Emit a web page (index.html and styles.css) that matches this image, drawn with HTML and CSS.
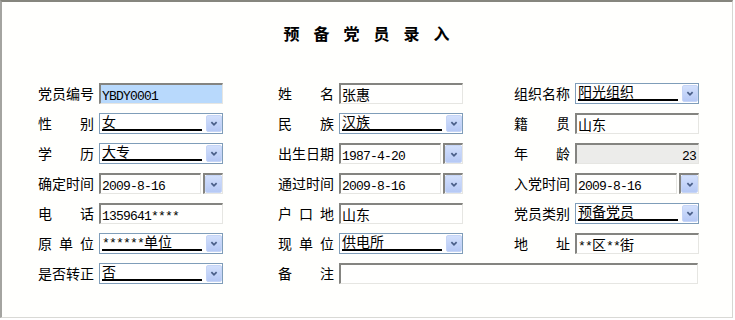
FILE: index.html
```html
<!DOCTYPE html>
<html lang="zh-CN">
<head>
<meta charset="utf-8">
<title>预备党员录入</title>
<link rel="stylesheet" href="styles.css">
</head>
<body>
<div class="win">
  <h1 class="title">预备党员录入</h1>
  <div class="form">
    <!-- row 1 -->
    <div class="field"><span class="lbl"><i>党</i><i>员</i><i>编</i><i>号</i></span>
      <div class="inset sel"><span class="lat">YBDY0001</span></div></div>
    <div class="field"><span class="lbl"><i>姓</i><i>名</i></span>
      <div class="inset">张惠</div></div>
    <div class="field"><span class="lbl"><i>组</i><i>织</i><i>名</i><i>称</i></span>
      <div class="combo"><span class="ctext">阳光组织</span><span class="btn"><svg viewBox="0 0 16 17" width="16" height="17"><path d="M5 7 L8 10 L11 7" fill="none" stroke="#4a5f88" stroke-width="2"/></svg></span></div></div>

    <!-- row 2 -->
    <div class="field"><span class="lbl"><i>性</i><i>别</i></span>
      <div class="combo"><span class="ctext">女</span><span class="btn"><svg viewBox="0 0 16 17" width="16" height="17"><path d="M5 7 L8 10 L11 7" fill="none" stroke="#4a5f88" stroke-width="2"/></svg></span></div></div>
    <div class="field"><span class="lbl"><i>民</i><i>族</i></span>
      <div class="combo"><span class="ctext">汉族</span><span class="btn"><svg viewBox="0 0 16 17" width="16" height="17"><path d="M5 7 L8 10 L11 7" fill="none" stroke="#4a5f88" stroke-width="2"/></svg></span></div></div>
    <div class="field"><span class="lbl"><i>籍</i><i>贯</i></span>
      <div class="inset">山东</div></div>

    <!-- row 3 -->
    <div class="field"><span class="lbl"><i>学</i><i>历</i></span>
      <div class="combo"><span class="ctext">大专</span><span class="btn"><svg viewBox="0 0 16 17" width="16" height="17"><path d="M5 7 L8 10 L11 7" fill="none" stroke="#4a5f88" stroke-width="2"/></svg></span></div></div>
    <div class="field"><span class="lbl"><i>出</i><i>生</i><i>日</i><i>期</i></span>
      <div class="date"><div class="inset"><span class="lat">1987-4-20</span></div><div class="dbox"><span class="btn"><svg viewBox="0 0 16 17" width="16" height="17"><path d="M5 7 L8 10 L11 7" fill="none" stroke="#4a5f88" stroke-width="2"/></svg></span></div></div></div>
    <div class="field"><span class="lbl"><i>年</i><i>龄</i></span>
      <div class="inset dis"><span class="lat">23</span></div></div>

    <!-- row 4 -->
    <div class="field"><span class="lbl"><i>确</i><i>定</i><i>时</i><i>间</i></span>
      <div class="date"><div class="inset"><span class="lat">2009-8-16</span></div><div class="dbox"><span class="btn"><svg viewBox="0 0 16 17" width="16" height="17"><path d="M5 7 L8 10 L11 7" fill="none" stroke="#4a5f88" stroke-width="2"/></svg></span></div></div></div>
    <div class="field"><span class="lbl"><i>通</i><i>过</i><i>时</i><i>间</i></span>
      <div class="date"><div class="inset"><span class="lat">2009-8-16</span></div><div class="dbox"><span class="btn"><svg viewBox="0 0 16 17" width="16" height="17"><path d="M5 7 L8 10 L11 7" fill="none" stroke="#4a5f88" stroke-width="2"/></svg></span></div></div></div>
    <div class="field"><span class="lbl"><i>入</i><i>党</i><i>时</i><i>间</i></span>
      <div class="date"><div class="inset"><span class="lat">2009-8-16</span></div><div class="dbox"><span class="btn"><svg viewBox="0 0 16 17" width="16" height="17"><path d="M5 7 L8 10 L11 7" fill="none" stroke="#4a5f88" stroke-width="2"/></svg></span></div></div></div>

    <!-- row 5 -->
    <div class="field"><span class="lbl"><i>电</i><i>话</i></span>
      <div class="inset"><span class="lat">1359641****</span></div></div>
    <div class="field"><span class="lbl"><i>户</i><i>口</i><i>地</i></span>
      <div class="inset">山东</div></div>
    <div class="field"><span class="lbl"><i>党</i><i>员</i><i>类</i><i>别</i></span>
      <div class="combo"><span class="ctext">预备党员</span><span class="btn"><svg viewBox="0 0 16 17" width="16" height="17"><path d="M5 7 L8 10 L11 7" fill="none" stroke="#4a5f88" stroke-width="2"/></svg></span></div></div>

    <!-- row 6 -->
    <div class="field"><span class="lbl"><i>原</i><i>单</i><i>位</i></span>
      <div class="combo"><span class="ctext"><span class="lat">******</span>单位</span><span class="btn"><svg viewBox="0 0 16 17" width="16" height="17"><path d="M5 7 L8 10 L11 7" fill="none" stroke="#4a5f88" stroke-width="2"/></svg></span></div></div>
    <div class="field"><span class="lbl"><i>现</i><i>单</i><i>位</i></span>
      <div class="combo"><span class="ctext">供电所</span><span class="btn"><svg viewBox="0 0 16 17" width="16" height="17"><path d="M5 7 L8 10 L11 7" fill="none" stroke="#4a5f88" stroke-width="2"/></svg></span></div></div>
    <div class="field"><span class="lbl"><i>地</i><i>址</i></span>
      <div class="inset"><span class="lat">**</span>区<span class="lat">**</span>街</div></div>

    <!-- row 7 -->
    <div class="field"><span class="lbl"><i>是</i><i>否</i><i>转</i><i>正</i></span>
      <div class="combo"><span class="ctext">否</span><span class="btn"><svg viewBox="0 0 16 17" width="16" height="17"><path d="M5 7 L8 10 L11 7" fill="none" stroke="#4a5f88" stroke-width="2"/></svg></span></div></div>
    <div class="field wide"><span class="lbl"><i>备</i><i>注</i></span>
      <div class="inset grow"></div></div>
  </div>
</div>
</body>
</html>
```

FILE: styles.css
```css
html, body {
  margin: 0;
  padding: 0;
  background: #ffffff;
}

body {
  width: 735px;
  height: 320px;
  overflow: hidden;
  font-family: "Noto Sans CJK SC", "Liberation Sans", sans-serif;
  font-size: 14px;
  color: #000;
}

.win {
  width: 733px;
  height: 318px;
  box-sizing: border-box;
  background: #fffffd;
  border-top: 2px solid #86867e;
  border-left: 2px solid #a4a4a0;
  border-right: 1px solid #d6d6d2;
  border-bottom: 1px solid #d9d9d5;
}

.title {
  margin: 21px 0 0 0;
  height: 20px;
  line-height: 20px;
  font-size: 16px;
  font-weight: bold;
  text-align: center;
  letter-spacing: 14px;
  padding-left: 13px;
}

.form {
  margin-top: 40px;
  padding-left: 36px;
  display: grid;
  grid-template-columns: 240px 236px 185px;
  grid-auto-rows: 21px;
  row-gap: 9px;
}

.field {
  display: flex;
  gap: 5px;
  align-items: stretch;
}

.field.wide {
  grid-column: 2 / span 2;
}

.lbl {
  width: 56px;
  flex: none;
  display: flex;
  justify-content: space-between;
  align-items: center;
  line-height: 21px;
}

.lbl i {
  font-style: normal;
}

.lat {
  font-family: "Liberation Mono", "DejaVu Sans Mono", monospace;
  font-size: 13px;
  letter-spacing: -0.8px;
}

.inset {
  width: 124px;
  box-sizing: border-box;
  height: 21px;
  border-style: solid;
  border-width: 2px 1px 1px 2px;
  border-color: #848480 #e6e6e2 #e6e6e2 #848480;
  background: #fffffe;
  padding-left: 1px;
  line-height: 18px;
  white-space: nowrap;
}

.inset.sel {
  background: #b8d9fc;
}

.inset.dis {
  background: #ececea;
  text-align: right;
  padding-right: 2px;
}

.inset.grow {
  width: auto;
  flex: 1;
  margin-right: 1px;
}

.combo {
  width: 124px;
  box-sizing: border-box;
  height: 21px;
  border: 1px solid #7f9db9;
  background: #ffffff;
  display: flex;
  align-items: flex-start;
}

.ctext {
  flex: 1;
  margin: 0 4px 0 2px;
  height: 15px;
  line-height: 15px;
  border-bottom: 2px solid #000;
  white-space: nowrap;
}

.btn {
  width: 16px;
  height: 17px;
  margin-top: 1px;
  flex: none;
  box-sizing: border-box;
  border: 1px solid #c6d5f6;
  border-radius: 2px;
  background: linear-gradient(#d3e0fc, #b6c9f5);
  display: flex;
  align-items: center;
  justify-content: center;
}

.btn svg {
  display: block;
  width: 14px;
  height: 15px;
}

.date {
  width: 124px;
  display: flex;
  gap: 2px;
}

.date .inset {
  width: 102px;
}

.dbox {
  width: 20px;
  height: 21px;
  box-sizing: border-box;
  border-style: solid;
  border-width: 2px 1px 1px 2px;
  border-color: #848480 #e6e6e2 #e6e6e2 #848480;
  background: #fffffe;
  display: flex;
}

.dbox .btn {
  width: 17px;
  height: 18px;
  margin-top: 0;
}
```
